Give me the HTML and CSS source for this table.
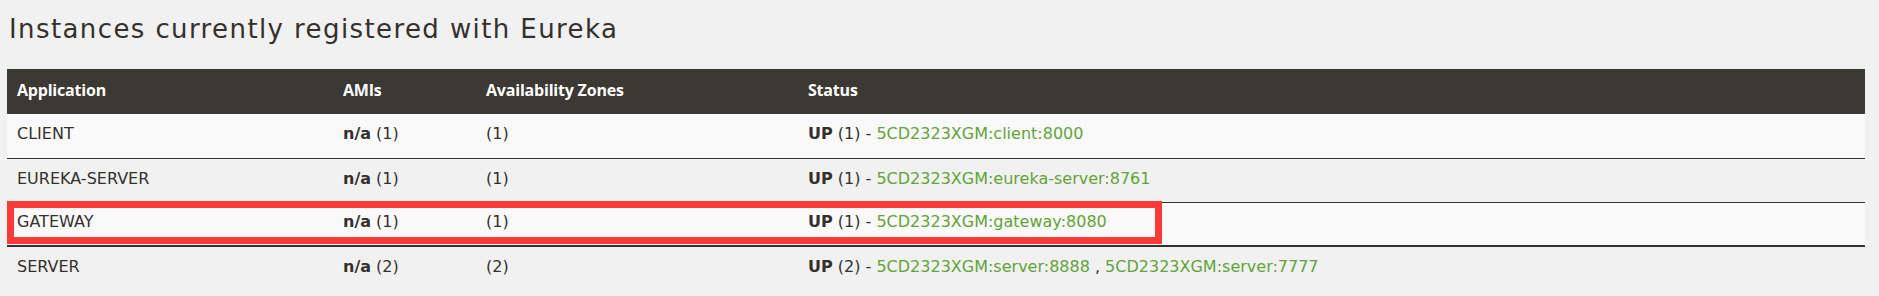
FILE: index.html
```html
<!DOCTYPE html>
<html lang="en">
<head>
<meta charset="utf-8">
<title>Eureka</title>
<link rel="stylesheet" href="styles.css">
</head>
<body>
<div class="page">
  <h1 class="title">Instances currently registered with Eureka</h1>
  <div class="table-wrap">
    <table class="instances">
      <colgroup>
        <col class="c-app"><col class="c-ami"><col class="c-zone"><col class="c-status">
      </colgroup>
      <thead>
        <tr><th>Application</th><th>AMIs</th><th>Availability Zones</th><th>Status</th></tr>
      </thead>
      <tbody>
        <tr class="odd"><td>CLIENT</td><td><b>n/a</b> (1)</td><td>(1)</td><td><b>UP</b> (1) - <a href="#">5CD2323XGM:client:8000</a></td></tr>
        <tr class="even"><td>EUREKA-SERVER</td><td><b>n/a</b> (1)</td><td>(1)</td><td><b>UP</b> (1) - <a href="#">5CD2323XGM:eureka-server:8761</a></td></tr>
        <tr class="odd thick"><td>GATEWAY</td><td><b>n/a</b> (1)</td><td>(1)</td><td><b>UP</b> (1) - <a href="#">5CD2323XGM:gateway:8080</a></td></tr>
        <tr class="even last"><td>SERVER</td><td><b>n/a</b> (2)</td><td>(2)</td><td><b>UP</b> (2) - <a href="#">5CD2323XGM:server:8888</a> , <a href="#">5CD2323XGM:server:7777</a></td></tr>
      </tbody>
    </table>
    <div class="highlight"></div>
  </div>
</div>
</body>
</html>
```

FILE: styles.css
```css
html, body {
  margin: 0;
  padding: 0;
  background: #f1f1f1;
}
.page {
  padding: 0 14px 0 7px;
  font-family: "DejaVu Sans", sans-serif;
  color: #34302d;
}
.title {
  margin: 0;
  padding: 14px 0 0 2px;
  height: 69px;
  box-sizing: border-box;
  font-family: "DejaVu Sans", sans-serif;
  font-weight: 400;
  font-size: 26px;
  letter-spacing: 1.4px;
  line-height: 30px;
  color: #34302d;
}
.table-wrap {
  position: relative;
}
.instances {
  width: 100%;
  border-collapse: collapse;
  table-layout: fixed;
  font-size: 16px;
}
.c-app { width: 326px; }
.c-ami { width: 143px; }
.c-zone { width: 322px; }
.instances th {
  background: #3c3833;
  color: #ffffff;
  font-family: "Open Sans", sans-serif;
  font-weight: 700;
  text-align: left;
  height: 45px;
  padding: 0 10px 4px;
  box-sizing: border-box;
  font-size: 16px;
  letter-spacing: -0.2px;
}
.instances td {
  height: 44px;
  padding: 0 10px 4px;
  box-sizing: border-box;
  vertical-align: middle;
}
.instances tr.odd td { background: #f9f9f9; }
.instances tr.even td { background: #f1f1f1; }
.instances tbody tr td { border-bottom: 1px solid #34302d; }
.instances tbody tr.thick td { border-bottom: 2px solid #34302d; }
.instances tbody tr.last td { border-bottom: none; }
.instances b { font-weight: 700; }
.instances a {
  color: #62a33a;
  text-decoration: none;
}
.highlight {
  position: absolute;
  left: 0;
  top: 132px;
  width: 1155px;
  height: 43px;
  box-sizing: border-box;
  border: 7px solid #fc3a3a;
}
```
